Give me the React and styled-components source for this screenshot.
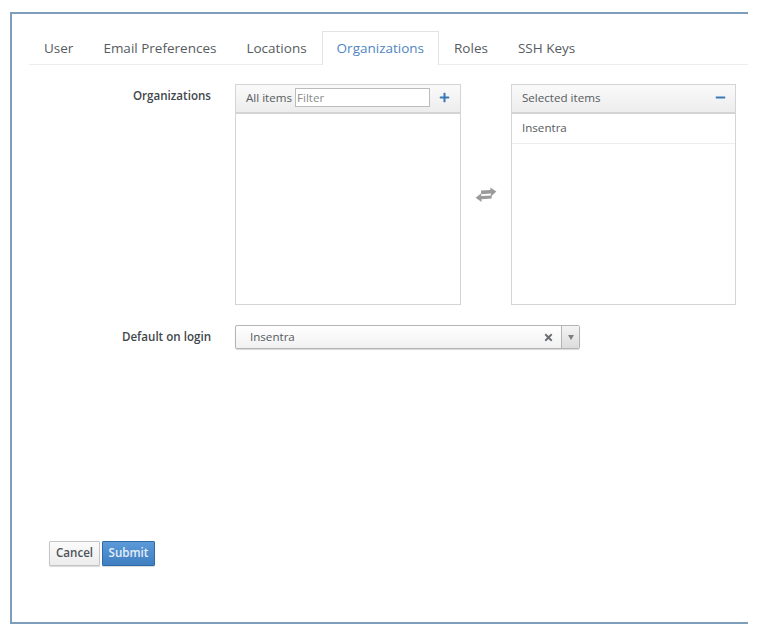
import styled, { createGlobalStyle } from 'styled-components';
import { FaPlus, FaMinus, FaTimes } from 'react-icons/fa';

const GlobalStyle = createGlobalStyle`
  html, body {
    margin: 0;
    background: #fff;
  }
  body {
    font-family: "Open Sans", "Liberation Sans", sans-serif;
    color: #4d5258;
  }
`;

const Page = styled.div`
  width: 775px;
  height: 639px;
  padding: 12px 0 0 10px;
  box-sizing: border-box;
`;

const Frame = styled.div`
  width: 738px;
  height: 612px;
  box-sizing: border-box;
  border: 2px solid #7d9dbb;
  border-right: 0;
  padding: 17px 0 0 17px;
  display: flex;
  flex-direction: column;
`;

const Tabs = styled.div`
  display: flex;
  height: 34px;
  box-sizing: border-box;
  border-bottom: 1px solid #ededed;
`;

const Tab = styled.div`
  height: 34px;
  box-sizing: border-box;
  padding: 0 ${p => (p.$active ? '14px' : '15px')};
  font-size: 13.5px;
  line-height: ${p => (p.$active ? '32px' : '34px')};
  white-space: nowrap;
  color: ${p => (p.$active ? '#4f86c2' : '#565b60')};
  background: ${p => (p.$active ? '#fff' : 'transparent')};
  border: ${p => (p.$active ? '1px solid #e3e3e3' : '0')};
  border-bottom: 0;
`;

const FormRow = styled.div`
  display: flex;
  align-items: flex-start;
  margin-top: ${p => p.$top || 0}px;
`;

const Label = styled.div`
  width: 182px;
  margin-right: 24px;
  text-align: right;
  font-size: 11.6px;
  font-weight: 600;
  line-height: 23px;
  color: #41464b;
`;

const ListBox = styled.div`
  width: ${p => p.$width}px;
  height: 221px;
  box-sizing: border-box;
  border: 1px solid #d4d4d4;
  background: #fff;
`;

const ListHead = styled.div`
  height: 29px;
  box-sizing: border-box;
  display: flex;
  align-items: center;
  padding: 0 10px 3px;
  font-size: 11.6px;
  color: #565b60;
  background: linear-gradient(to bottom, #fafafa, #ededed);
  border-bottom: 2px solid #d4d4d4;
`;

const Filter = styled.input`
  width: 135px;
  height: 19px;
  box-sizing: border-box;
  margin-left: 3px;
  padding: 0 1px;
  border: 1px solid #bcbcbc;
  background: #fff;
  font: 11.6px "Open Sans", sans-serif;
  outline: none;

  &::placeholder {
    color: #8b8d8f;
    opacity: 1;
  }
`;

const HeadIcon = styled.span`
  margin-left: auto;
  margin-right: ${p => p.$nudge || 0}px;
  display: flex;
  color: #3a78b8;
  font-size: 11px;
`;

const ListItem = styled.div`
  height: 30px;
  box-sizing: border-box;
  padding: 0 10px;
  font-size: 11.6px;
  line-height: 28px;
  color: #565b60;
  border-bottom: 1px solid #ededed;
`;

const Swap = styled.div`
  width: 50px;
  height: 221px;
  flex: none;
  display: flex;
  align-items: center;
  justify-content: center;
`;

const Select = styled.div`
  width: 345px;
  height: 24px;
  box-sizing: border-box;
  display: flex;
  align-items: stretch;
  border: 1px solid #b4b4b4;
  border-radius: 2px;
  background: linear-gradient(to bottom, #fff, #f1f1f1);
  box-shadow: 0 1px 1px rgba(0, 0, 0, 0.15);
`;

const SelectValue = styled.div`
  flex: 1;
  padding-left: 14px;
  font-size: 11.6px;
  line-height: 21px;
  color: #565b60;
`;

const Clear = styled.span`
  display: flex;
  align-items: center;
  margin-right: 7px;
  color: #6a6e72;
  font-size: 11px;
`;

const Caret = styled.span`
  width: 17px;
  display: flex;
  align-items: center;
  justify-content: center;
  border-left: 1px solid #b4b4b4;
  background: linear-gradient(to bottom, #f4f4f4, #dcdcdc);

  &::after {
    content: '';
    border-left: 3px solid transparent;
    border-right: 3px solid transparent;
    border-top: 5px solid #7b7f83;
  }
`;

const Actions = styled.div`
  display: flex;
  gap: 2px;
  margin: 192px 0 0 20px;
`;

const Button = styled.button`
  height: 25px;
  width: ${p => p.$width}px;
  box-sizing: border-box;
  padding: 0 0 2px;
  border-radius: 1px;
  font: 600 11.6px "Open Sans", sans-serif;
  border: 1px solid ${p => (p.$primary ? '#2e6aa8' : '#c4c4c4')};
  color: ${p => (p.$primary ? '#e4eef8' : '#4d5258')};
  background: ${p =>
    p.$primary
      ? 'linear-gradient(to bottom, #5b99d8, #3f7fc1)'
      : 'linear-gradient(to bottom, #fbfbfb, #ececec)'};
  box-shadow: 0 1px 1px rgba(0, 0, 0, 0.15);
`;

const tabs = ['User', 'Email Preferences', 'Locations', 'Organizations', 'Roles', 'SSH Keys'];

function SwapIcon() {
  return (
    <svg width="22" height="16" viewBox="0 0 22 16" fill="#9a9a9a">
      <path d="M6 3.6 L15.5 3 L15.2 0.6 L21.4 4.6 L16 9.4 L15.8 6.6 L6.2 7.2 Z" />
      <path d="M0.6 10.8 L6 6.6 L6.2 9 L16.6 8.4 L16.8 11.6 L6.4 12.2 L6.6 15 Z" />
    </svg>
  );
}

export default function App() {
  return (
    <Page>
      <GlobalStyle />
      <Frame>
        <Tabs>
          {tabs.map(t => (
            <Tab key={t} $active={t === 'Organizations'}>{t}</Tab>
          ))}
        </Tabs>
        <FormRow $top={19}>
          <Label>Organizations</Label>
          <ListBox $width={226}>
            <ListHead>
              All items
              <Filter placeholder="Filter" />
              <HeadIcon><FaPlus /></HeadIcon>
            </ListHead>
          </ListBox>
          <Swap><SwapIcon /></Swap>
          <ListBox $width={225}>
            <ListHead>
              Selected items
              <HeadIcon $nudge={-1}><FaMinus /></HeadIcon>
            </ListHead>
            <ListItem>Insentra</ListItem>
          </ListBox>
        </FormRow>
        <FormRow $top={20}>
          <Label>Default on login</Label>
          <Select>
            <SelectValue>Insentra</SelectValue>
            <Clear><FaTimes /></Clear>
            <Caret />
          </Select>
        </FormRow>
        <Actions>
          <Button $width={51}>Cancel</Button>
          <Button $width={53} $primary>Submit</Button>
        </Actions>
      </Frame>
    </Page>
  );
}
